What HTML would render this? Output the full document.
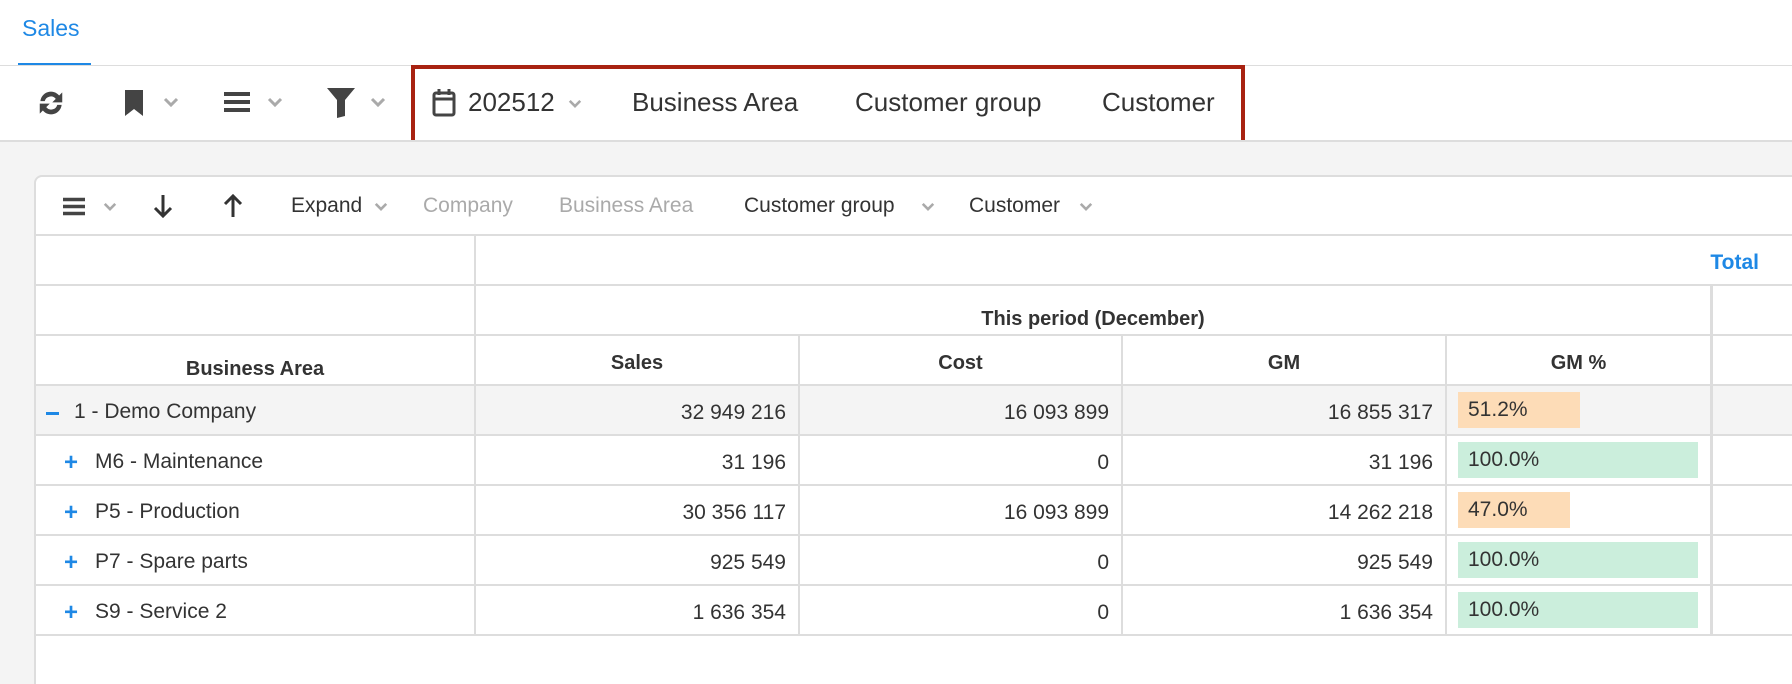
<!DOCTYPE html>
<html><head><meta charset="utf-8"><style>
*{margin:0;padding:0;box-sizing:border-box}
html,body{width:1792px;height:684px;overflow:hidden}
body{background:#fff;font-family:"Liberation Sans",sans-serif;color:#333;position:relative}
.a{position:absolute;white-space:nowrap}
.t{font-size:26px;line-height:30px;color:#333}
.s{font-size:21px;line-height:24px}
.hl{position:absolute;height:2px;background:#ddd}
.vl{position:absolute;width:2px;background:#ddd}
.num{position:absolute;font-size:21px;line-height:50px;text-align:right;padding-top:3px}
.bar{position:absolute;height:36px;left:1458px}
.o{background:#fddcb7}.g{background:#cbeedc}
.pc{position:absolute;left:1468px;font-size:21px;line-height:50px;padding-top:0}
.lab{position:absolute;font-size:21px}
.plus{position:absolute;left:64px;font-size:24px;font-weight:bold;color:#1e88e5}
</style></head><body>
<div class="a" style="left:22px;top:15px;font-size:23px;color:#1e88e5">Sales</div>
<div class="a" style="left:18px;top:63px;width:73px;height:3px;background:#1e88e5"></div>
<div class="hl" style="left:0;top:65px;width:1792px;height:1px"></div>
<svg class="a" style="left:36px;top:88px" width="30" height="30" viewBox="0 0 24 24"><path d="M3.5 10.5a8.5 8.5 0 0 1 15-4.5l2.5-2.5v8h-8l2.8-2.8A5 5 0 0 0 7 10.5z M20.5 13.5a8.5 8.5 0 0 1-15 4.5l-2.5 2.5v-8h8l-2.8 2.8A5 5 0 0 0 17 13.5z" fill="#444"/></svg>
<svg class="a" style="left:124px;top:89px" width="20" height="28" viewBox="0 0 20 28"><path d="M1 1h18v26l-9-7-9 7z" fill="#444"/></svg>
<svg class="a" style="left:163px;top:97px" width="16" height="10" viewBox="0 0 16 10"><path d="M2 2l6 6 6-6" stroke="#aaa" stroke-width="3" fill="none"/></svg>
<svg class="a" style="left:224px;top:91px" width="26" height="22" viewBox="0 0 26 22"><path d="M0 3h26M0 11h26M0 19h26" stroke="#444" stroke-width="4"/></svg>
<svg class="a" style="left:267px;top:97px" width="16" height="10" viewBox="0 0 16 10"><path d="M2 2l6 6 6-6" stroke="#aaa" stroke-width="3" fill="none"/></svg>
<svg class="a" style="left:327px;top:88px" width="28" height="30" viewBox="0 0 28 30"><path d="M0 0h28l-10 12v16l-8 2V12z" fill="#444"/></svg>
<svg class="a" style="left:370px;top:97px" width="16" height="10" viewBox="0 0 16 10"><path d="M2 2l6 6 6-6" stroke="#aaa" stroke-width="3" fill="none"/></svg>
<div class="a" style="left:411px;top:65px;width:834px;height:79px;border:4px solid #a82211"></div>
<svg class="a" style="left:432px;top:87px" width="24" height="30" viewBox="0 0 24 30"><rect x="2" y="6" width="20" height="22" rx="2" fill="none" stroke="#444" stroke-width="3"/><path d="M2 12h20M7 2v6M17 2v6" stroke="#444" stroke-width="3"/></svg>
<div class="a t" style="left:468px;top:87px">202512</div>
<svg class="a" style="left:568px;top:99px" width="14" height="9" viewBox="0 0 16 10"><path d="M2 2l6 6 6-6" stroke="#aaa" stroke-width="3" fill="none"/></svg>
<div class="a t" style="left:632px;top:87px">Business Area</div>
<div class="a t" style="left:855px;top:87px">Customer group</div>
<div class="a t" style="left:1102px;top:87px">Customer</div>
<div class="a" style="left:0;top:140px;width:1792px;height:544px;background:#f4f4f4;border-top:2px solid #ddd"></div>
<div class="a" style="left:34px;top:175px;width:1780px;height:540px;background:#fff;border:2px solid #ddd;border-radius:8px"></div>
<svg class="a" style="left:63px;top:197px" width="22" height="19" viewBox="0 0 22 19"><path d="M0 2.5h22M0 9.5h22M0 16.5h22" stroke="#444" stroke-width="3.5"/></svg>
<svg class="a" style="left:103px;top:202px" width="14" height="9" viewBox="0 0 16 10"><path d="M2 2l6 6 6-6" stroke="#aaa" stroke-width="3" fill="none"/></svg>
<svg class="a" style="left:153px;top:194px" width="20" height="24" viewBox="0 0 20 24"><path d="M10 1v21M2 14l8 8 8-8" stroke="#333" stroke-width="3" fill="none"/></svg>
<svg class="a" style="left:223px;top:194px" width="20" height="24" viewBox="0 0 20 24"><path d="M10 23V2M2 10l8-8 8 8" stroke="#333" stroke-width="3" fill="none"/></svg>
<div class="a s" style="left:291px;top:194px">Expand</div>
<svg class="a" style="left:374px;top:202px" width="14" height="9" viewBox="0 0 16 10"><path d="M2 2l6 6 6-6" stroke="#aaa" stroke-width="3" fill="none"/></svg>
<div class="a s" style="left:423px;top:194px;color:#aaa">Company</div>
<div class="a s" style="left:559px;top:194px;color:#aaa">Business Area</div>
<div class="a s" style="left:744px;top:194px">Customer group</div>
<svg class="a" style="left:921px;top:202px" width="14" height="9" viewBox="0 0 16 10"><path d="M2 2l6 6 6-6" stroke="#aaa" stroke-width="3" fill="none"/></svg>
<div class="a s" style="left:969px;top:194px">Customer</div>
<svg class="a" style="left:1079px;top:202px" width="14" height="9" viewBox="0 0 16 10"><path d="M2 2l6 6 6-6" stroke="#aaa" stroke-width="3" fill="none"/></svg>
<div class="a" style="left:36px;top:386px;width:1756px;height:49px;background:#f4f4f4"></div>
<div class="hl" style="left:34px;top:234px;width:1758px"></div>
<div class="hl" style="left:34px;top:284px;width:1758px"></div>
<div class="hl" style="left:34px;top:334px;width:1758px"></div>
<div class="hl" style="left:34px;top:384px;width:1758px"></div>
<div class="hl" style="left:34px;top:434px;width:1758px"></div>
<div class="hl" style="left:34px;top:484px;width:1758px"></div>
<div class="hl" style="left:34px;top:534px;width:1758px"></div>
<div class="hl" style="left:34px;top:584px;width:1758px"></div>
<div class="hl" style="left:34px;top:634px;width:1758px"></div>
<div class="vl" style="left:474px;top:235px;height:400px"></div>
<div class="vl" style="left:798px;top:335px;height:300px"></div>
<div class="vl" style="left:1121px;top:335px;height:300px"></div>
<div class="vl" style="left:1445px;top:335px;height:300px"></div>
<div class="vl" style="left:1710px;top:285px;height:350px;width:3px"></div>
<div class="a" style="left:1700px;top:251px;width:59px;text-align:right;font-size:21px;font-weight:bold;color:#1e88e5">Total</div>
<div class="a" style="left:476px;top:308px;width:1234px;text-align:center;font-size:20px;font-weight:bold">This period (December)</div>
<div class="a" style="left:36px;top:358px;width:438px;text-align:center;font-size:20px;font-weight:bold">Business Area</div>
<div class="a" style="left:476px;top:352px;width:322px;text-align:center;font-size:20px;font-weight:bold">Sales</div>
<div class="a" style="left:800px;top:352px;width:321px;text-align:center;font-size:20px;font-weight:bold">Cost</div>
<div class="a" style="left:1123px;top:352px;width:322px;text-align:center;font-size:20px;font-weight:bold">GM</div>
<div class="a" style="left:1447px;top:352px;width:263px;text-align:center;font-size:20px;font-weight:bold">GM %</div>

<div class="a" style="left:46px;top:412px;width:13px;height:3px;background:#1e88e5"></div>
<div class="lab" style="left:74px;top:400px">1 - Demo Company</div>
<div class="num" style="left:476px;top:385px;width:310px">32 949 216</div>
<div class="num" style="left:800px;top:385px;width:309px">16 093 899</div>
<div class="num" style="left:1123px;top:385px;width:310px">16 855 317</div>
<div class="bar o" style="top:392px;width:122px"></div><div class="pc" style="top:385px">51.2%</div>

<div class="plus" style="top:449px">+</div>
<div class="lab" style="left:95px;top:450px">M6 - Maintenance</div>
<div class="num" style="left:476px;top:435px;width:310px">31 196</div>
<div class="num" style="left:800px;top:435px;width:309px">0</div>
<div class="num" style="left:1123px;top:435px;width:310px">31 196</div>
<div class="bar g" style="top:442px;width:240px"></div><div class="pc" style="top:435px">100.0%</div>

<div class="plus" style="top:499px">+</div>
<div class="lab" style="left:95px;top:500px">P5 - Production</div>
<div class="num" style="left:476px;top:485px;width:310px">30 356 117</div>
<div class="num" style="left:800px;top:485px;width:309px">16 093 899</div>
<div class="num" style="left:1123px;top:485px;width:310px">14 262 218</div>
<div class="bar o" style="top:492px;width:112px"></div><div class="pc" style="top:485px">47.0%</div>

<div class="plus" style="top:549px">+</div>
<div class="lab" style="left:95px;top:550px">P7 - Spare parts</div>
<div class="num" style="left:476px;top:535px;width:310px">925 549</div>
<div class="num" style="left:800px;top:535px;width:309px">0</div>
<div class="num" style="left:1123px;top:535px;width:310px">925 549</div>
<div class="bar g" style="top:542px;width:240px"></div><div class="pc" style="top:535px">100.0%</div>

<div class="plus" style="top:599px">+</div>
<div class="lab" style="left:95px;top:600px">S9 - Service 2</div>
<div class="num" style="left:476px;top:585px;width:310px">1 636 354</div>
<div class="num" style="left:800px;top:585px;width:309px">0</div>
<div class="num" style="left:1123px;top:585px;width:310px">1 636 354</div>
<div class="bar g" style="top:592px;width:240px"></div><div class="pc" style="top:585px">100.0%</div>
</body></html>
